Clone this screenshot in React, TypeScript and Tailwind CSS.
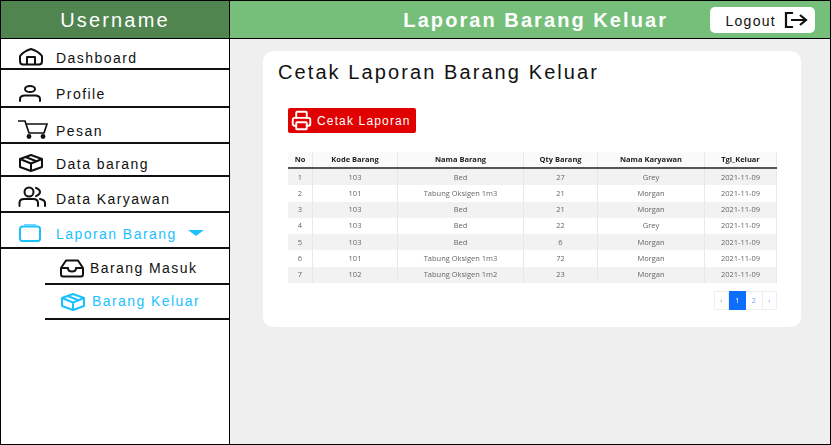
import { Printer } from 'lucide-react';

const ROWS = [
  ['1', '103', 'Bed', '27', 'Grey', '2021-11-09'],
  ['2', '101', 'Tabung Oksigen 1m3', '21', 'Morgan', '2021-11-09'],
  ['3', '103', 'Bed', '21', 'Morgan', '2021-11-09'],
  ['4', '103', 'Bed', '22', 'Grey', '2021-11-09'],
  ['5', '103', 'Bed', '6', 'Morgan', '2021-11-09'],
  ['6', '101', 'Tabung Oksigen 1m3', '72', 'Morgan', '2021-11-09'],
  ['7', '102', 'Tabung Oksigen 1m2', '23', 'Morgan', '2021-11-09'],
];

const HEADERS = ['No', 'Kode Barang', 'Nama Barang', 'Qty Barang', 'Nama Karyawan', 'Tgl_Keluar'];
const WIDTHS = ['w-[25px]', 'w-[85px]', 'w-[126px]', 'w-[74px]', 'w-[107px]', 'w-[72px]'];

const HomeIcon = () => (
  <svg width="26" height="18" viewBox="0 0 26 18" fill="none" stroke="currentColor" strokeWidth="2" strokeLinejoin="round">
    <path d="M2 8 Q6 3 13 1 Q20 3 24 8 V13 Q24 16.5 21 16.5 H5 Q2 16.5 2 13 Z" />
    <path d="M9 16.5 V9 H17 V16.5" />
  </svg>
);

const UserIcon = () => (
  <svg width="24" height="17" viewBox="0 0 24 17" fill="none" stroke="currentColor" strokeWidth="2" strokeLinecap="round">
    <ellipse cx="12" cy="4" rx="5" ry="3" />
    <path d="M2 16 V14 Q2 10.5 7 10.5 H17 Q22 10.5 22 14 V16" />
  </svg>
);

const CartIcon = () => (
  <svg width="30" height="19" viewBox="0 0 30 19" fill="none" stroke="currentColor" strokeWidth="1.7">
    <path d="M0 1 H7 L11 13 H26 L29 4 H8" />
    <circle cx="11" cy="16.5" r="1.6" fill="currentColor" />
    <circle cx="25" cy="16.5" r="1.6" fill="currentColor" />
  </svg>
);

const BoxIcon = () => (
  <svg width="26" height="18" viewBox="0 0 26 18" fill="none" stroke="currentColor" strokeWidth="2" strokeLinejoin="round">
    <path d="M13 1 L24 5 V13 L13 17 L2 13 V5 Z" />
    <path d="M2 5 L13 9.5 L24 5 M13 9.5 V17 M7.5 3 L18.5 7.2" />
  </svg>
);

const PeopleIcon = () => (
  <svg width="28" height="21" viewBox="0 0 28 21" fill="none" stroke="currentColor" strokeWidth="2" strokeLinecap="round">
    <circle cx="11" cy="6" r="4.5" />
    <path d="M1.5 20 V17 Q1.5 13 6 13 H15 Q20 13 20 17 V20" />
    <path d="M18 1.8 Q22 3.5 22 6 Q22 8.5 18 10.2" />
    <path d="M22 13 Q27 14 27 17 V20" />
  </svg>
);

const ClipIcon = () => (
  <svg width="24" height="18" viewBox="0 0 24 18" fill="none" stroke="currentColor" strokeWidth="2" strokeLinejoin="round">
    <rect x="2" y="2.5" width="20" height="14.5" rx="2.5" />
    <rect x="6" y="0" width="12" height="2" fill="#6fd3ff" stroke="none" />
  </svg>
);

const TrayIcon = () => (
  <svg width="24" height="19" viewBox="0 0 24 19" fill="none" stroke="currentColor" strokeWidth="2" strokeLinejoin="round">
    <path d="M6 1.5 H18 L23 9 V15 Q23 17.5 21 17.5 H3 Q1 17.5 1 15 V9 Z" />
    <path d="M1 9 H8 Q8 12.5 12 12.5 Q16 12.5 16 9 H23" />
  </svg>
);

const LogoutIcon = () => (
  <svg width="24" height="18" viewBox="0 0 24 18" fill="none" stroke="currentColor" strokeWidth="2.2">
    <path d="M9 2 H2 V16 H9" />
    <path d="M7 9 H22 M16 4 L22 9 L16 14" />
  </svg>
);

const MenuRow = ({ icon, label, className, active }: { icon: React.ReactNode; label: string; className: string; active?: boolean }) => (
  <div className={`flex items-end pl-[17px] border-b-2 border-[#111] ${className} ${active ? 'text-[#1cc1ff]' : 'text-[#111]'}`}>
    <span className="w-[38px] flex justify-start shrink-0">{icon}</span>
    <span className="text-[14px] tracking-[1.45px] leading-[16px]">{label}</span>
    {active && <span className="ml-[11px] mb-[6px] w-0 h-0 border-x-[8px] border-x-transparent border-t-[6px] border-t-[#1cc1ff]" />}
  </div>
);

const SubRow = ({ icon, label, active, className }: { icon: React.ReactNode; label: string; active?: boolean; className: string }) => (
  <div className={`ml-[44px] flex items-center pl-[15px] border-b-2 border-[#111] ${className} ${active ? 'text-[#1cc1ff]' : 'text-[#111]'}`}>
    <span className="w-[30px] shrink-0 flex">{icon}</span>
    <span className="text-[14px] tracking-[1.42px]">{label}</span>
  </div>
);

export default function App() {
  return (
    <div className="w-[831px] h-[445px] border border-black flex bg-[#efefef] font-['Liberation_Sans',Arial,sans-serif] overflow-hidden">
      {/* Sidebar */}
      <aside className="w-[229px] h-full bg-white border-r border-black flex flex-col shrink-0">
        <div className="h-[38px] shrink-0 bg-[#508550] border-b border-black flex items-center justify-center text-white text-[20px] tracking-[2.15px]">
          Username
        </div>
        <MenuRow className="h-[31px] pb-[2px]" icon={<HomeIcon />} label="Dashboard" />
        <MenuRow className="h-[38px] pb-[4px]" icon={<UserIcon />} label="Profile" />
        <MenuRow className="h-[36px] pb-[3px] pl-[15px]" icon={<CartIcon />} label="Pesan" />
        <MenuRow className="h-[33px] pb-[3px]" icon={<BoxIcon />} label="Data barang" />
        <MenuRow className="h-[36px] pb-[4px] pl-[16px]" icon={<PeopleIcon />} label="Data Karyawan" />
        <MenuRow className="h-[36px] pb-[5px]" icon={<ClipIcon />} label="Laporan Barang" active />
        <SubRow className="h-[36px] pt-[4px]" icon={<TrayIcon />} label="Barang Masuk" />
        <SubRow className="h-[35px] pl-[14px] [&>span:first-child]:w-[32px]" icon={<BoxIcon />} label="Barang Keluar" active />
      </aside>

      {/* Main */}
      <div className="flex-1 flex flex-col min-w-0">
        <header className="h-[38px] shrink-0 bg-[#75bf7b] border-b border-black flex items-center justify-end pr-[15px]">
          <h1 className="text-white font-bold text-[20px] tracking-[2.07px] mr-[42px]">Laporan Barang Keluar</h1>
          <button className="w-[105px] h-[26px] bg-white rounded-[5px] flex items-center justify-end pr-[7px] gap-[8px] text-[#111] text-[14px] tracking-[1.3px]">
            <span className="pt-[3px]">Logout</span>
            <LogoutIcon />
          </button>
        </header>

        <main className="pl-[33px] pt-[12px]">
          <section className="w-[538px] h-[276px] bg-white rounded-[10px] pl-[15px] pt-[9px]">
            <h2 className="text-[20px] leading-[24px] tracking-[2.09px] text-[#111]">Cetak Laporan Barang Keluar</h2>

            <button className="mt-[24px] ml-[10px] w-[128px] h-[25px] bg-[#e00000] rounded-[2px] flex items-center pl-[3px] gap-[5px] text-white text-[12px] tracking-[1.15px]">
              <Printer size={21} strokeWidth={2.2} />
              Cetak Laporan
            </button>

            <div className="ml-[10px] mt-[19px] w-[489px] blur-[0.3px] font-['Open_Sans',sans-serif] text-[7.5px] text-[#666]">
              <div className="flex h-[17px] border-b-2 border-[#555] bg-[#fafafa] text-[#222] font-bold">
                {HEADERS.map((h, i) => (
                  <div key={h} className={`${WIDTHS[i]} flex items-center justify-center border-r border-[#e8e8e8]`}>{h}</div>
                ))}
              </div>
              {ROWS.map((row, r) => (
                <div key={row[0]} className={`flex h-[16.3px] ${r % 2 === 0 ? 'bg-[#f2f2f2]' : 'bg-white'}`}>
                  {row.map((c, i) => (
                    <div key={i} className={`${WIDTHS[i]} flex items-center justify-center border-r border-[#e8e8e8]`}>{c}</div>
                  ))}
                </div>
              ))}
            </div>

            <div className="ml-[436px] mt-[8px] flex w-[63px] h-[19px] blur-[0.2px] font-['Open_Sans',sans-serif] text-[7.5px] text-[#6ea8fe]">
              <div className="w-[15px] flex items-center justify-center border border-[#eee] text-[#999]">‹</div>
              <div className="w-[17px] flex items-center justify-center bg-[#0d6efd] text-white">1</div>
              <div className="w-[16px] flex items-center justify-center border-y border-[#eee]">2</div>
              <div className="w-[15px] flex items-center justify-center border border-[#eee]">›</div>
            </div>
          </section>
        </main>
      </div>
    </div>
  );
}
